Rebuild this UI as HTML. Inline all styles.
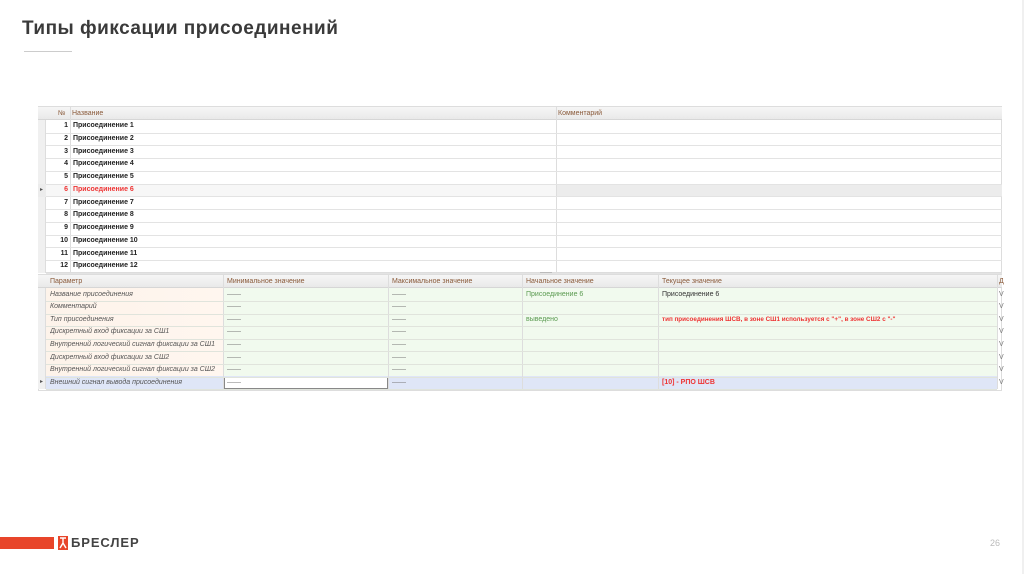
<!DOCTYPE html>
<html><head><meta charset="utf-8"><style>
*{margin:0;padding:0;box-sizing:border-box}
body{width:1024px;height:574px;background:#fff;position:relative;overflow:hidden;font-family:"Liberation Sans","DejaVu Sans",sans-serif}
.a{position:absolute}
.t{font-size:7px;color:#333;white-space:nowrap;overflow:hidden;line-height:12.6px}
.h{font-size:7px;color:#8a5a3a;white-space:nowrap;line-height:13px}
.i{font-style:italic;color:#555}
.b{font-weight:bold;color:#222}
</style></head><body>
<div class="a" style="left:0;top:0;width:1024px;height:574px;border-right:2px solid #f0f0f0"></div>
<div class="a" style="left:22px;top:18px;font-size:19px;font-weight:bold;color:#3a3a3a;letter-spacing:0.5px">Типы фиксации присоединений</div>
<div class="a" style="left:24px;top:51px;width:48px;height:1px;background:#ccc"></div>

<div class="a" style="left:38px;top:106px;width:964px;height:167px;border:1px solid #ddd;background:#fff"></div>
<div class="a" style="left:38px;top:107px;width:964px;height:13px;background:linear-gradient(#f6f6f6,#e9e9e9);border-bottom:1px solid #d6d6d6"></div>
<div class="a h" style="left:58px;top:107px">№</div>
<div class="a h" style="left:72px;top:107px">Название</div>
<div class="a h" style="left:558px;top:107px">Комментарий</div>
<div class="a" style="left:38px;top:120px;width:8px;height:153px;background:#f0f0f0;border-right:1px solid #ddd"></div>
<div class="a" style="left:38px;top:184px;width:964px;height:12.6px;background:#ececec"></div>
<div class="a" style="left:46px;top:184px;width:510px;height:12.6px;background:#f7f7f7"></div>
<div class="a" style="left:70px;top:107px;width:1px;height:166px;background:#ddd"></div>
<div class="a" style="left:556px;top:107px;width:1px;height:166px;background:#ddd"></div>
<div class="a" style="left:40px;top:184px;font-size:6px;color:#555;line-height:12.6px">▸</div>
<div id="top"></div>

<div class="a" style="left:38px;top:274px;width:964px;height:117px;border:1px solid #ddd;background:#fff"></div>
<div class="a" style="left:38px;top:275px;width:964px;height:13px;background:linear-gradient(#f6f6f6,#e9e9e9);border-bottom:1px solid #d6d6d6"></div>
<div class="a" style="left:540px;top:272px;width:12px;height:1px;background:#bbb"></div>
<div class="a" style="left:46px;top:288px;width:177px;height:88px;background:linear-gradient(90deg,#fdf3ea,#fff6ef)"></div>
<div class="a" style="left:223px;top:288px;width:774px;height:88px;background:#f1faee"></div>
<div class="a" style="left:46px;top:376px;width:951px;height:13px;background:#dfe6f7"></div>
<div class="a" style="left:224px;top:377px;width:164px;height:12px;background:#fff;border:1px solid #888"></div>
<div class="a" style="left:38px;top:288px;width:8px;height:101px;background:#f0f0f0;border-right:1px solid #ddd"></div>
<div class="a" style="left:40px;top:376px;font-size:6px;color:#555;line-height:12.6px">▸</div>
<div class="a" style="left:223px;top:275px;width:1px;height:114px;background:#ddd"></div>
<div class="a" style="left:388px;top:275px;width:1px;height:114px;background:#ddd"></div>
<div class="a" style="left:522px;top:275px;width:1px;height:114px;background:#ddd"></div>
<div class="a" style="left:658px;top:275px;width:1px;height:114px;background:#ddd"></div>
<div class="a" style="left:997px;top:275px;width:1px;height:114px;background:#ddd"></div>
<div class="a h" style="left:50px;top:275px">Параметр</div>
<div class="a h" style="left:227px;top:275px">Минимальное значение</div>
<div class="a h" style="left:392px;top:275px">Максимальное значение</div>
<div class="a h" style="left:526px;top:275px">Начальное значение</div>
<div class="a h" style="left:662px;top:275px">Текущее значение</div>
<div class="a h" style="left:999px;top:275px">Д</div>
<div id="bot"></div>

<div class="a" style="left:0;top:537px;width:54px;height:12px;background:#e8452a"></div>
<svg class="a" style="left:58px;top:536px" width="10" height="14" viewBox="0 0 10 14"><rect width="10" height="14" fill="#e8452a"/><path d="M2 2h6M5 2v5l-3 5M5 7l3 5" stroke="#fff" stroke-width="1.4" fill="none"/></svg>
<div class="a" style="left:71px;top:535px;font-size:13px;font-weight:bold;color:#444;letter-spacing:0.9px">БРЕСЛЕР</div>
<div class="a" style="left:990px;top:538px;font-size:9px;color:#bbb">26</div>

<script>
var s='';
for(var k=0;k<12;k++){var y=120+k*12.75;
s+='<div class="a" style="left:46px;top:'+(y+12.7)+'px;width:956px;height:1px;background:#e3e3e3"></div>';
var c=k==5?'color:#e33;':'';
s+='<div class="a t b" style="left:46px;width:22px;text-align:right;top:'+y+'px;'+c+'">'+(k+1)+'</div>';
s+='<div class="a t b" style="left:73px;top:'+y+'px;'+c+'">Присоединение '+(k+1)+'</div>';}
document.getElementById('top').outerHTML=s;
var p=['Название присоединения','Комментарий','Тип присоединения','Дискретный вход фиксации за СШ1','Внутренний логический сигнал фиксации за СШ1','Дискретный вход фиксации за СШ2','Внутренний логический сигнал фиксации за СШ2','Внешний сигнал вывода присоединения'];
s='';
for(var k=0;k<8;k++){var y=288.5+k*12.6;
s+='<div class="a" style="left:46px;top:'+(y+12.4)+'px;width:951px;height:1px;background:#e0e4dc"></div>';
s+='<div class="a t i" style="left:50px;top:'+y+'px">'+p[k]+'</div>';
s+='<div class="a t" style="left:227px;top:'+y+'px;color:#777">——</div>';
s+='<div class="a t" style="left:392px;top:'+y+'px;color:#777">——</div>';
s+='<div class="a t" style="left:999px;top:'+y+'px;color:#777">V</div>';}
s+='<div class="a t" style="left:526px;top:288.5px;color:#5a9a50">Присоединение 6</div>';
s+='<div class="a t" style="left:662px;top:288.5px">Присоединение 6</div>';
s+='<div class="a t" style="left:526px;top:313.7px;color:#5a9a50">выведено</div>';
s+='<div class="a t" style="left:662px;top:313.7px;color:#e33;font-weight:bold;font-size:6.3px">тип присоединения ШСВ, в зоне СШ1 используется с "+", в зоне СШ2 с "-"</div>';
s+='<div class="a t" style="left:662px;top:376.7px;color:#e33;font-weight:bold">[10] - РПО ШСВ</div>';
document.getElementById('bot').outerHTML=s;
</script>
</body></html>
